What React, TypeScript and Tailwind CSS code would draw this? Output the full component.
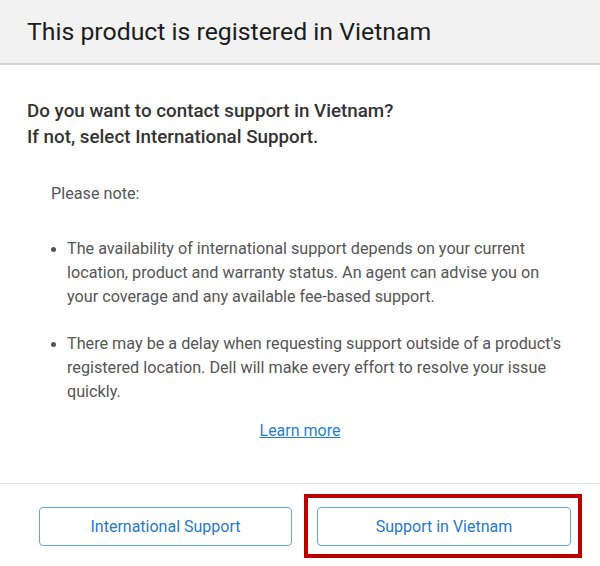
import React from "react";

const FONT = { fontFamily: "Roboto, 'Liberation Sans', Arial, sans-serif" };

function Bullet({ children }: { children: React.ReactNode }) {
  return (
    <li className="flex leading-[24px]">
      <span className="w-[16px] shrink-0 pt-[10px]">
        <span className="block w-[5px] h-[5px] rounded-full bg-[#555555]" />
      </span>
      <span>{children}</span>
    </li>
  );
}

export default function App() {
  return (
    <div className="w-[600px] h-[566px] bg-white overflow-hidden" style={FONT}>
      {/* header */}
      <div className="h-[65px] bg-[#f2f2f2] border-b-2 border-[#d6d6d6] flex items-center pl-[27px]">
        <h1 className="text-[24.8px] leading-none text-[#1c1c1c] pt-[1px]">
          This product is registered in Vietnam
        </h1>
      </div>

      {/* body */}
      <div className="pl-[27px] pr-[30px] pt-[33px]">
        <p className="text-[18.8px] leading-[26px] font-medium text-[#333333]">
          Do you want to contact support in Vietnam?
          <br />
          If not, select International Support.
        </p>

        <div className="pl-[24px] pt-[32px] text-[16.2px] text-[#555555]">
          <p className="leading-[24px]">Please note:</p>

          <ul className="mt-[31px] flex flex-col gap-[23px]">
            <Bullet>
              The availability of international support depends on your current
              location, product and warranty status. An agent can advise you on
              your coverage and any available fee-based support.
            </Bullet>
            <Bullet>
              There may be a delay when requesting support outside of a product's
              registered location. Dell will make every effort to resolve your issue
              quickly.
            </Bullet>
          </ul>
        </div>

        <div className="flex justify-center mt-[15px] pl-[3px]">
          <a href="#" className="text-[16px] leading-[24px] text-[#1f7fd4] underline">
            Learn more
          </a>
        </div>
      </div>

      {/* footer */}
      <div className="mt-[40px] border-t border-[#e2e2e2] relative">
        <div className="flex gap-[25px] pl-[39px] pt-[23px]">
          <button className="w-[253px] h-[39px] rounded-[4px] border border-[#63a6e6] text-[16px] text-[#1f79cc]">
            International Support
          </button>
          <button className="w-[254px] h-[39px] rounded-[4px] border border-[#63a6e6] text-[16px] text-[#1f79cc]">
            Support in Vietnam
          </button>
        </div>
        {/* highlight annotation */}
        <div className="absolute left-[304px] top-[10px] w-[278px] h-[64px] border-4 border-[#bb0000] pointer-events-none" />
      </div>
    </div>
  );
}
